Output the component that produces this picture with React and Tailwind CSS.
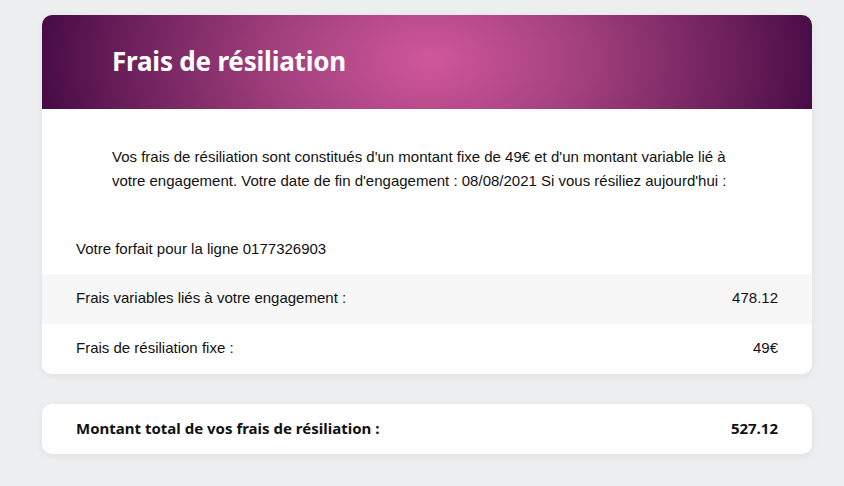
import React from 'react';

const rows = [
  { label: 'Frais variables liés à votre engagement :', value: '478.12', shaded: true },
  { label: 'Frais de résiliation fixe :', value: '49€', shaded: false },
];

export default function App() {
  return (
    <div className="min-h-screen bg-[#edeef0] pl-[42px] pr-[32px] pt-[15px] pb-8 font-['Liberation_Sans',Arial,sans-serif] text-[15px] text-[#111]">
      {/* carte principale */}
      <div className="bg-white rounded-[10px] overflow-hidden shadow-[0_2px_8px_rgba(0,0,0,0.06)]">
        <div className="h-[94px] flex items-center pl-[70px] bg-[radial-gradient(ellipse_440px_280px_at_388px_45px,#d0579b_0%,#a2407d_35%,#6a1f5a_70%,#33003a_100%)]">
          <h1 className="text-white text-[26px] font-bold font-['Noto_Sans',sans-serif] tracking-[-0.2px] -mt-[1px]">
            Frais de résiliation
          </h1>
        </div>

        <p className="pl-[70px] pr-[69px] pt-[36px] leading-[24px]">
          Vos frais de résiliation sont constitués d'un montant fixe de 49€ et d'un montant variable lié à
          votre engagement. Votre date de fin d'engagement : 08/08/2021 Si vous résiliez aujourd'hui :
        </p>

        <div className="px-[34px] pt-[45px] pb-[13px]">Votre forfait pour la ligne 0177326903</div>

        {rows.map((r) => (
          <div
            key={r.label}
            className={`h-[50px] flex items-center justify-between px-[34px] ${r.shaded ? 'bg-[#f7f7f7]' : 'bg-white'}`}
          >
            <span>{r.label}</span>
            <span>{r.value}</span>
          </div>
        ))}
      </div>

      {/* total */}
      <div className="mt-[30px] bg-white rounded-[10px] h-[50px] flex items-center justify-between px-[34px] font-['Noto_Sans',sans-serif] font-bold text-[15px] shadow-[0_2px_8px_rgba(0,0,0,0.06)]">
        <span>Montant total de vos frais de résiliation :</span>
        <span>527.12</span>
      </div>
    </div>
  );
}
